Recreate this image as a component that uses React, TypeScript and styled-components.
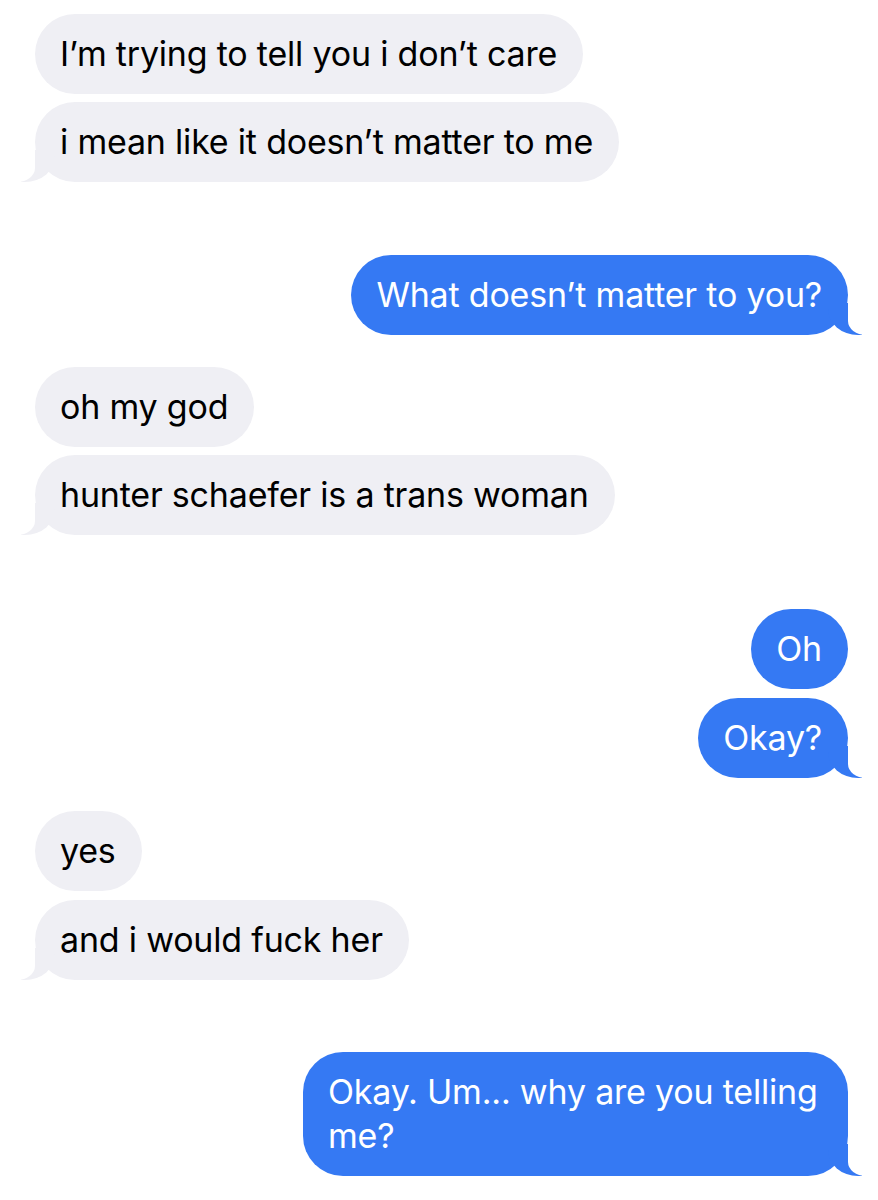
import * as React from "react";
import styled, { createGlobalStyle, css } from "styled-components";

type Side = "in" | "out";

type Message = {
  side: Side;
  text: string;
  gap: number;
  tail?: boolean;
};

const messages: Message[] = [
  { side: "in", text: "I\u2019m trying to tell you i don\u2019t care", gap: 0 },
  { side: "in", text: "i mean like it doesn\u2019t matter to me", gap: 8, tail: true },
  { side: "out", text: "What doesn\u2019t matter to you?", gap: 73, tail: true },
  { side: "in", text: "oh my god", gap: 32 },
  { side: "in", text: "hunter schaefer is a trans woman", gap: 8, tail: true },
  { side: "out", text: "Oh", gap: 74 },
  { side: "out", text: "Okay?", gap: 9, tail: true },
  { side: "in", text: "yes", gap: 33 },
  { side: "in", text: "and i would fuck her", gap: 9, tail: true },
  { side: "out", text: "Okay. Um... why are you telling me?", gap: 72, tail: true },
];

const colors = {
  received: "#efeff4",
  sent: "#3579f3",
  page: "#ffffff",
};

const GlobalStyle = createGlobalStyle`
  html, body {
    margin: 0;
    padding: 0;
    background: ${colors.page};
  }
  body {
    font-family: Inter, "Noto Sans", "Liberation Sans", sans-serif;
    -webkit-font-smoothing: antialiased;
  }
`;

const Thread = styled.main`
  display: flex;
  flex-direction: column;
  padding: 14px 30px 20px 35px;
  width: 878px;
  box-sizing: border-box;
`;

const Row = styled.div<{ $side: Side; $gap: number }>`
  display: flex;
  justify-content: ${(p) => (p.$side === "out" ? "flex-end" : "flex-start")};
  margin-top: ${(p) => p.$gap}px;
`;

const tailIn = css`
  &::before {
    content: "";
    position: absolute;
    bottom: 0;
    left: -14px;
    width: 34px;
    height: 32px;
    background: ${colors.received};
    border-bottom-right-radius: 30px 26px;
  }
  &::after {
    content: "";
    position: absolute;
    bottom: 0;
    left: -34px;
    width: 34px;
    height: 32px;
    background: ${colors.page};
    border-bottom-right-radius: 18px 14px;
  }
`;

const tailOut = css`
  &::before {
    content: "";
    position: absolute;
    bottom: 0;
    right: -14px;
    width: 34px;
    height: 32px;
    background: ${colors.sent};
    border-bottom-left-radius: 30px 26px;
  }
  &::after {
    content: "";
    position: absolute;
    bottom: 0;
    right: -34px;
    width: 34px;
    height: 32px;
    background: ${colors.page};
    border-bottom-left-radius: 18px 14px;
  }
`;

const Bubble = styled.div<{ $side: Side; $tail?: boolean }>`
  position: relative;
  z-index: 0;
  box-sizing: border-box;
  max-width: ${(p) => (p.$side === "out" ? 545 : 640)}px;
  padding: 18px 26px 18px 25px;
  border-radius: 40px;
  font-size: 34px;
  line-height: 44px;
  letter-spacing: -0.2px;
  background: ${(p) => (p.$side === "out" ? colors.sent : colors.received)};
  color: ${(p) => (p.$side === "out" ? "#ffffff" : "#000000")};

  &::before,
  &::after {
    z-index: -1;
  }
  ${(p) => p.$tail && (p.$side === "out" ? tailOut : tailIn)}
`;

export default function App() {
  return (
    <>
      <GlobalStyle />
      <Thread>
        {messages.map((m, i) => (
          <Row key={i} $side={m.side} $gap={m.gap}>
            <Bubble $side={m.side} $tail={m.tail}>
              {m.text}
            </Bubble>
          </Row>
        ))}
      </Thread>
    </>
  );
}
